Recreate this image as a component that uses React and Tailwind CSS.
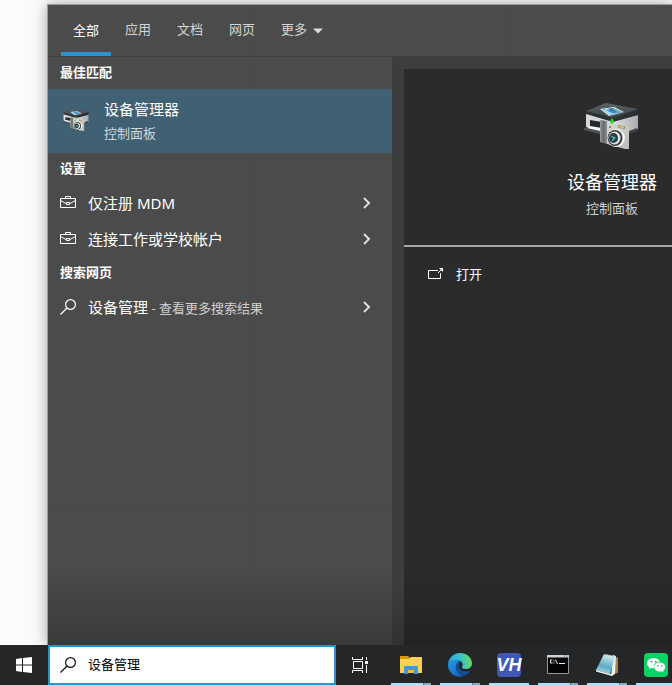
const FONT = "font-['Noto_Sans','Noto_Sans_CJK_SC',sans-serif]";

function DeviceIcon({ className }) {
  return (
    <svg viewBox="0 0 56 50" className={className} aria-hidden="true">
      <defs>
        <linearGradient id="lid" x1="0" y1="0" x2="0" y2="1">
          <stop offset="0" stopColor="#5b6468" />
          <stop offset="1" stopColor="#3a4246" />
        </linearGradient>
        <linearGradient id="body" x1="0" y1="0" x2="1" y2="0">
          <stop offset="0" stopColor="#dfe0e1" />
          <stop offset="1" stopColor="#a9acae" />
        </linearGradient>
        <linearGradient id="grip" x1="0" y1="0" x2="1" y2="0">
          <stop offset="0" stopColor="#999b9d" />
          <stop offset="0.5" stopColor="#696b6d" />
          <stop offset="1" stopColor="#8f9193" />
        </linearGradient>
        <linearGradient id="cam" x1="0" y1="0" x2="1" y2="1">
          <stop offset="0" stopColor="#d8d8d5" />
          <stop offset="1" stopColor="#bcbcb8" />
        </linearGradient>
      </defs>
      <path d="M2 10 L29 18 L29 30 L18 30 L2 24Z" fill="#d6d8da" />
      <path d="M29 17 L54 12 L54 26 L44 30 L29 30Z" fill="url(#body)" />
      <path d="M45 28 L53 25 V28 L45 31Z" fill="#3c4447" />
      <path d="M2 8 L22 1 L54 7 L54 12 L29 19 L2 11Z" fill="#2a3033" />
      <path d="M2 8 L22 0 L54 6 L29 15Z" fill="url(#lid)" />
      <path d="M16 6 L30 4 L40 9 L25 13Z" fill="#e4edf2" />
      <path d="M18 6.500 L29 5 L38 9 L26 12Z" fill="#2368ad" />
      <path d="M18 6.500 L24 6 L34 10 L26 12Z" fill="#a8d9ef" />
      <path d="M22 7 L27 7 L33 9.500 L29 10.500Z" fill="#3c86cb" />
      <path d="M28 6 L30 5.500 L38 9 L35 10Z" fill="#78b8a6" />
      <path d="M6 17 L18 19 L18 26 L6 24Z" fill="#23292c" />
      <path d="M6 23 L18 25 L18 29 L3 26Z" fill="#f4f6f7" />
      <path d="M0 25 L3 25 L16 28 L16 31 L0 27Z" fill="#4b555a" />
      <path d="M26 18 L28 15 L30 18 L29 21 H27Z" fill="#2fd02a" />
      <path d="M16 17 L23 18 V41 L16 39Z" fill="url(#grip)" />
      <path d="M23 20 L45 23 L45 46 L41 46 L23 41Z" fill="url(#cam)" />
      <path d="M34 22 L41 23.500 V26 L34 24.500Z" fill="#9a8c5c" />
      <path d="M35 23.500 L40 24.500" stroke="#e0d9bc" />
      <circle cx="26" cy="24" r="1" fill="#6b6b69" />
      <ellipse cx="32" cy="35" rx="9" ry="9" fill="#f4f4f2" />
      <ellipse cx="31" cy="35" rx="7.500" ry="8" fill="#3a4042" />
      <ellipse cx="30.500" cy="35" rx="6" ry="6.500" fill="#e2e3e2" />
      <ellipse cx="29.500" cy="35" rx="4.500" ry="5" fill="#2b3a3e" />
      <path d="M27.500 33 L31 36 M28 38 L31 34" stroke="#49b6b8" strokeWidth="1.500" />
    </svg>
  );
}

function Briefcase() {
  return (
    <svg viewBox="0 0 16 14" className="h-3.5 w-4 shrink-0" fill="none" stroke="#fff" aria-hidden="true">
      <path d="M0.500 2.500H15.500V11.500H0.500Z M5.500 2.500V0.500H10.500V2.500" />
      <path d="M0.500 4.500L6 7.500M10 7.500L15.500 4.500M6.500 6.500H9.500V8.500H6.500Z" />
    </svg>
  );
}

function Magnifier({ color }) {
  return (
    <svg viewBox="0 0 16 16" className="h-4 w-4 shrink-0" fill="none" stroke={color} strokeWidth="1.2" aria-hidden="true">
      <circle cx="10.500" cy="5.500" r="4.900" />
      <path d="M7 9 L0.500 15.500" />
    </svg>
  );
}

function Chevron() {
  return (
    <svg viewBox="0 0 8 12" className="ml-auto h-3 w-2 shrink-0" fill="none" stroke="#ddd" strokeWidth="2" aria-hidden="true">
      <path d="M1 1 L6 6 L1 11" />
    </svg>
  );
}

function ResultRow({ icon, children }) {
  return (
    <button type="button" className="flex h-9 w-full items-center gap-3 pr-[21px] pl-3 text-left text-[15px] text-white">
      {icon}
      <span className="whitespace-nowrap">{children}</span>
      <Chevron />
    </button>
  );
}

function Heading({ children }) {
  return <h2 className="flex h-8 items-center pl-3 text-[13px] font-bold text-white">{children}</h2>;
}

const filters = ["应用", "文档", "网页"];

function Filters() {
  return (
    <nav className="flex h-[52px] shrink-0 border-b border-[#404040] pl-[13px] text-[13px] text-[#d4d4d4]">
      <button type="button" className="w-[50px] border-b-4 border-[#2b93d1] pt-1 text-white">全部</button>
      <div className="ml-px flex pb-0.5">
        {filters.map((name) => (
          <button key={name} type="button" className="w-[52px]">{name}</button>
        ))}
        <button type="button" className="flex items-center gap-1.5 pl-[13px]">
          更多
          <svg viewBox="0 0 10 6" className="mt-0.5 h-1.5 w-2.5" fill="#ddd" aria-hidden="true">
            <path d="M0 0.500H10L5 5.500Z" />
          </svg>
        </button>
      </div>
    </nav>
  );
}

function Results() {
  return (
    <section className="w-[344px] shrink-0">
      <Heading>最佳匹配</Heading>
      <button type="button" className="flex h-16 w-full items-center gap-3 bg-[#406073] pl-3 text-left">
        <span className="flex w-8 justify-center">
          <DeviceIcon className="h-6 w-7" />
        </span>
        <span>
          <span className="block text-[15px] leading-6 text-white">设备管理器</span>
          <span className="block text-[13px] leading-6 text-[#cfd7dc]">控制面板</span>
        </span>
      </button>
      <Heading>设置</Heading>
      <ResultRow icon={<Briefcase />}>仅注册 MDM</ResultRow>
      <ResultRow icon={<Briefcase />}>连接工作或学校帐户</ResultRow>
      <Heading>搜索网页</Heading>
      <ResultRow icon={<Magnifier color="#fff" />}>
        设备管理<span className="text-[13px] text-[#cfcfcf]"> - 查看更多搜索结果</span>
      </ResultRow>
    </section>
  );
}

function Preview() {
  return (
    <section className="flex w-[440px] shrink-0 flex-col bg-linear-to-b from-[#3d3d3d] from-90% to-[#313130] px-3 pt-3">
      <div className="flex-1 bg-linear-to-b from-[#2b2b2b] from-85% to-[#222423]">
        <div className="flex h-[178px] flex-col items-center border-b-2 border-[#aaa6a9] pt-[34px]">
          <DeviceIcon className="h-[50px] w-14" />
          <h1 className="mt-[15px] text-[18px] leading-7 text-white">设备管理器</h1>
          <p className="text-[13px] leading-6 text-[#cfcfcf]">控制面板</p>
        </div>
        <button type="button" className="flex h-14 items-center gap-3 pl-6 text-[13px] text-white">
          <svg viewBox="0 0 16 14" className="h-3.5 w-4" fill="none" stroke="#fff" aria-hidden="true">
            <path d="M10 2.500H0.500V10.500H12.500V5M10 5L13.500 1.500" />
            <path d="M11 0H15V4Z" fill="#fff" stroke="none" />
          </svg>
          打开
        </button>
      </div>
    </section>
  );
}

function FolderIcon() {
  return (
    <svg viewBox="0 0 24 24" className="h-6 w-6" aria-hidden="true">
      <path d="M1 3H9L11 5V8H1Z" fill="#dc9a10" />
      <path d="M1 6H10L12 4H23V20H1Z" fill="#fccf55" />
      <path d="M6 13H18L19 14V21H15V17H9V21H5V14Z" fill="#3f98d9" />
      <path d="M9 17H15V20H9Z" fill="#f5bd2f" />
    </svg>
  );
}

function EdgeIcon() {
  return (
    <svg viewBox="0 0 24 24" className="h-6 w-6" aria-hidden="true">
      <defs>
        <linearGradient id="edgeTop" x1="0" y1="0.5" x2="1" y2="0.4">
          <stop offset="0" stopColor="#2aa6e6" />
          <stop offset="0.5" stopColor="#35c1d3" />
          <stop offset="1" stopColor="#6bdc55" />
        </linearGradient>
        <linearGradient id="edgeLeft" x1="0" y1="0" x2="0.6" y2="1">
          <stop offset="0" stopColor="#1fa0e0" />
          <stop offset="1" stopColor="#1469c8" />
        </linearGradient>
      </defs>
      <path d="M0 11C1 4 6 0 12 0C19 0 24 5 24 10.500C24 14 21 16 18 16C15 16 13.500 15 14 14C15 12.500 15 11 14 9.500C12 6.500 4 5 0 11Z" fill="url(#edgeTop)" />
      <path d="M0 12C1 6.500 8 5.500 12 8C10 8.500 8 11 8 14C8 19 12 23 16 23C8 26 0 20 0 12Z" fill="url(#edgeLeft)" />
      <path d="M12 8C8 10 7 13 8.500 17C10 21 14 24 17 22.500C20 21 22 19 22.500 17.500C18 19.500 12 18.500 11 14.500C10.500 12 11 9.500 12 8Z" fill="#154c94" />
    </svg>
  );
}

function VhIcon() {
  return (
    <span className="flex h-6 w-6 items-center justify-center rounded-sm bg-[#3f58b5] font-['Liberation_Sans_Narrow','Liberation_Sans',sans-serif] text-[18px] leading-none font-bold text-white italic">
      VH
    </span>
  );
}

function TerminalIcon() {
  return (
    <svg viewBox="0 0 24 24" className="h-6 w-6" aria-hidden="true">
      <path d="M1.500 2.500H22.500V20.500H1.500Z" fill="#050505" stroke="#979a9b" />
      <path d="M1 2H23V4.500H1Z" fill="#cfd2d4" />
      <path d="M18 3H19M20 3H21" stroke="#4268a0" />
      <path d="M6.500 7H4.500V10H6.500M8 7.500V8.500M8 9.500V10.500M9.500 6.500L11.500 11M13 10.500H19" fill="none" stroke="#eee" />
    </svg>
  );
}

function NotepadIcon() {
  return (
    <svg viewBox="0 0 24 24" className="h-6 w-6" aria-hidden="true">
      <defs>
        <linearGradient id="pad" x1="0.6" y1="0" x2="0.3" y2="1">
          <stop offset="0" stopColor="#d8eff3" />
          <stop offset="0.6" stopColor="#5fabc0" />
          <stop offset="1" stopColor="#a9dbe5" />
        </linearGradient>
      </defs>
      <path d="M20 3L23 5V20L18 21Z" fill="#a88345" />
      <path d="M18 2L21 3L20 21L16 23Z" fill="#e8edee" />
      <path d="M9 1L20 3L15 21L1 17Z" fill="url(#pad)" />
      <path d="M1 17L15 21L20 20L17 23L1 18.500Z" fill="#eef5f6" />
      <path d="M9 1.500L20 3" stroke="#7b8588" strokeDasharray="1 1" />
    </svg>
  );
}

function WeChatIcon() {
  return (
    <svg viewBox="0 0 24 24" className="h-6 w-6" aria-hidden="true">
      <rect width="24" height="24" rx="4" fill="#09d263" />
      <path d="M9.500 5C5.900 5 3 7.300 3 10.200C3 11.800 4 13.200 5.400 14.200L5 16L7.100 15C8 15.300 9 15.400 10 15.300C9 11.500 12 8.500 15.900 8.600C15.200 6.500 12.600 5 9.500 5Z" fill="#fff" />
      <path d="M15.700 9.500C12.600 9.500 10.200 11.500 10.200 14C10.200 16.500 12.600 18.500 15.700 18.500C16.400 18.500 17.100 18.400 17.700 18.200L19.600 19L19.200 17.500C20.500 16.700 21.300 15.400 21.300 14C21.300 11.500 18.800 9.500 15.700 9.500Z" fill="#fff" />
      <g fill="#09b957">
        <circle cx="7.500" cy="8.700" r="0.900" />
        <circle cx="11.600" cy="8.700" r="0.900" />
        <circle cx="13.900" cy="12.700" r="0.800" />
        <circle cx="17.500" cy="12.700" r="0.800" />
      </g>
    </svg>
  );
}

const apps = [
  { name: "文件资源管理器", Icon: FolderIcon, stacked: true },
  { name: "Microsoft Edge", Icon: EdgeIcon, stacked: true },
  { name: "VH", Icon: VhIcon, stacked: false },
  { name: "命令提示符", Icon: TerminalIcon, stacked: true },
  { name: "记事本", Icon: NotepadIcon, stacked: true },
  { name: "微信", Icon: WeChatIcon, stacked: false },
];

function Taskbar() {
  return (
    <footer className="z-10 flex h-10 shrink-0 overflow-hidden bg-[#242627]">
      <button type="button" aria-label="开始" className="flex w-12 shrink-0 items-center justify-center">
        <svg viewBox="0 0 16 16" className="h-4 w-4" fill="#fff" aria-hidden="true">
          <path d="M0 2L6 1V7.500H0ZM7 1L16 0V7.500H7ZM0 8.500H6V15L0 14ZM7 8.500H16V16L7 15Z" />
        </svg>
      </button>
      <label className="flex w-72 shrink-0 items-center gap-3 border-2 border-[#2b93cc] bg-white pl-2.5">
        <Magnifier color="#111" />
        <input type="text" aria-label="搜索" defaultValue="设备管理" className="min-w-0 flex-1 bg-transparent text-[13px] text-black outline-none" />
      </label>
      <button type="button" aria-label="任务视图" className="flex w-12 shrink-0 items-center justify-center">
        <svg viewBox="0 0 16 16" className="h-4 w-4" fill="none" stroke="#fff" aria-hidden="true">
          <path d="M0.500 0V2.500H10.500V0M1.500 4.500H10.500V11.500H1.500ZM0.500 16V13.500H10.500V16M14.500 0V3M14.500 8V16" />
          <path d="M13 4H16V7H13Z" fill="#fff" stroke="none" />
        </svg>
      </button>
      <div className="flex shrink-0 gap-[9px] pl-[7px]">
        {apps.map(({ name, Icon, stacked }) => (
          <button key={name} type="button" aria-label={name} className="flex w-10 flex-col items-center pt-2">
            <Icon />
            <span className="mt-auto flex h-0.5 w-full">
              <span className="flex-1 bg-[#a9dffb]" />
              {stacked && <span className="w-2 border-l border-[#55738a] bg-[#8aa9c0]" />}
            </span>
          </button>
        ))}
      </div>
    </footer>
  );
}

export default function App() {
  return (
    <div className={`flex h-screen flex-col overflow-hidden bg-[#fbfbfb] ${FONT}`}>
      <div className="flex min-h-0 flex-1 flex-col pt-1 pl-[47px]">
        <main className="flex min-h-0 flex-1 flex-col overflow-hidden border-t border-l border-[#9c9c9c] bg-linear-to-b from-[#4b4b4b] from-88% to-[#393a3a] shadow-[0_0_14px_rgba(0,0,0,0.35)]">
          <Filters />
          <div className="flex min-h-0 flex-1">
            <Results />
            <Preview />
          </div>
        </main>
      </div>
      <Taskbar />
    </div>
  );
}
